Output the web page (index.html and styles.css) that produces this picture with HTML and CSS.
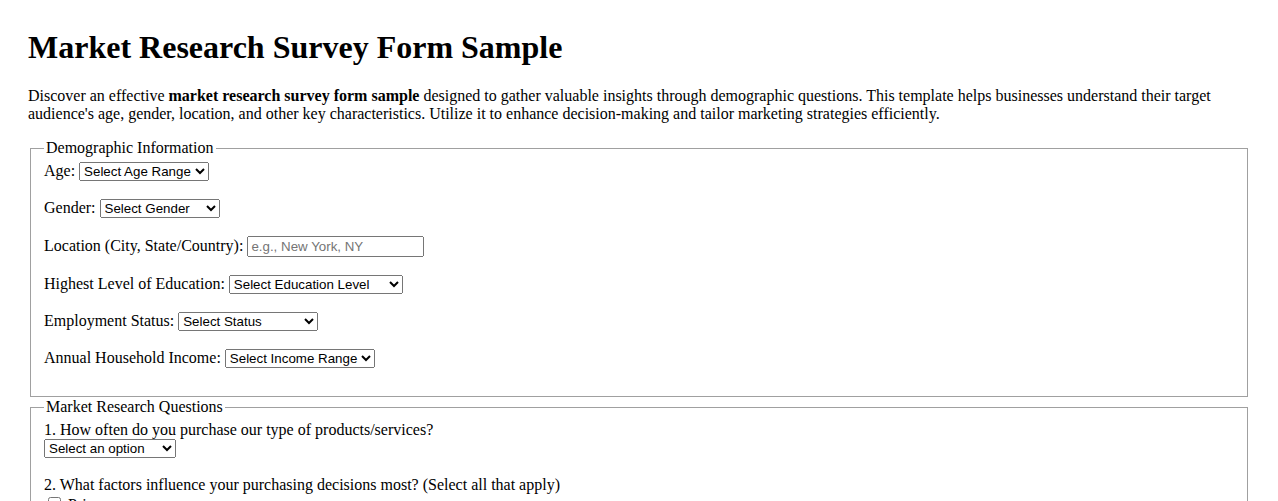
FILE: index.html
```html
<!DOCTYPE html>
<html lang="en">
<head>
<meta charset="utf-8">
<title>Market Research Survey Form Sample</title>
<link rel="stylesheet" href="styles.css">
</head>
<body>
<h1>Market Research Survey Form Sample</h1>
<p>Discover an effective <strong>market research survey form sample</strong> designed to gather valuable insights through demographic questions. This template helps businesses understand their target audience's age, gender, location, and other key characteristics. Utilize it to enhance decision-making and tailor marketing strategies efficiently.</p>
<form>
  <fieldset>
    <legend>Demographic Information</legend>
    <div class="form-group">
      <label for="age">Age:</label>
      <select id="age" class="sel-age">
        <option>Select Age Range</option>
        <option>Under 18</option>
        <option>18-24</option>
        <option>25-34</option>
        <option>35-44</option>
        <option>45-54</option>
        <option>55-64</option>
        <option>65+</option>
      </select>
    </div>
    <div class="form-group">
      <label for="gender">Gender:</label>
      <select id="gender" class="sel-gender">
        <option>Select Gender</option>
        <option>Male</option>
        <option>Female</option>
        <option>Non-binary</option>
        <option>Prefer not to say</option>
      </select>
    </div>
    <div class="form-group">
      <label for="location">Location (City, State/Country):</label>
      <input type="text" id="location" class="txt-location" placeholder="e.g., New York, NY">
    </div>
    <div class="form-group">
      <label for="education">Highest Level of Education:</label>
      <select id="education" class="sel-education">
        <option>Select Education Level</option>
        <option>High School</option>
        <option>Some College</option>
        <option>Bachelor's Degree</option>
        <option>Master's Degree</option>
        <option>Doctorate</option>
      </select>
    </div>
    <div class="form-group">
      <label for="employment">Employment Status:</label>
      <select id="employment" class="sel-employment">
        <option>Select Status</option>
        <option>Employed Full-time</option>
        <option>Employed Part-time</option>
        <option>Self-employed</option>
        <option>Unemployed</option>
        <option>Student</option>
        <option>Retired</option>
      </select>
    </div>
    <div class="form-group">
      <label for="income">Annual Household Income:</label>
      <select id="income" class="sel-income">
        <option>Select Income Range</option>
        <option>Under $25,000</option>
        <option>$25,000 - $49,999</option>
        <option>$50,000 - $74,999</option>
        <option>$75,000 - $99,999</option>
        <option>$100,000+</option>
      </select>
    </div>
  </fieldset>
  <fieldset>
    <legend>Market Research Questions</legend>
    <div class="form-group">
      <label for="frequency">1. How often do you purchase our type of products/services?</label><br>
      <select id="frequency" class="sel-frequency">
        <option>Select an option</option>
        <option>Weekly</option>
        <option>Monthly</option>
        <option>Quarterly</option>
        <option>Annually</option>
        <option>Rarely</option>
      </select>
    </div>
    <div class="form-group">
      <label>2. What factors influence your purchasing decisions most? (Select all that apply)</label><br>
      <label><input type="checkbox"> Price</label><br>
      <label><input type="checkbox"> Quality</label><br>
      <label><input type="checkbox"> Brand Reputation</label><br>
      <label><input type="checkbox"> Customer Service</label>
    </div>
  </fieldset>
</form>
</body>
</html>
```
FILE: styles.css
```css
body {
  margin: 8px;
  padding: 0 20px 20px;
  font-family: "Liberation Serif", "Times New Roman", serif;
  font-size: 16px;
  color: #000;
  background: #fff;
}
h1 {
  font-size: 32px;
  font-weight: bold;
  margin: 21px 0;
}
p {
  margin: 16px 0;
}
fieldset {
  margin: 0 2px 1px;
  border: 1px solid #a0a0a0;
  padding: 5px 13px 10px;
}
legend {
  padding: 0 2px;
}
.form-group {
  margin-bottom: 18px;
}
select,
input[type="text"] {
  font-family: "Liberation Sans", Arial, sans-serif;
  font-size: 13.333px;
}
select {
  height: 19px;
}
.sel-age { width: 130px; }
.sel-gender { width: 120px; }
.txt-location { width: 177px; height: 21px; box-sizing: border-box; }
.sel-education { width: 174px; }
.sel-employment { width: 140px; }
.sel-income { width: 150px; }
.sel-frequency { width: 132px; }
```
